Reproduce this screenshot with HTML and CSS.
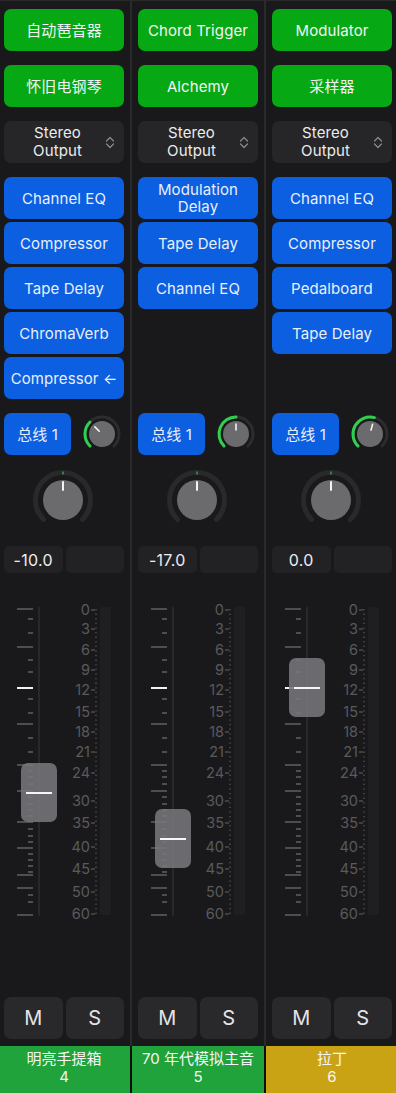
FILE: index.html
```html
<!DOCTYPE html>
<html lang="zh">
<head>
<meta charset="utf-8">
<title>Mixer</title>
<link rel="stylesheet" href="styles.css">
</head>
<body>
<div class="mixer">

  <!-- Strip 1 -->
  <section class="strip">
    <div class="btn green">自动琶音器</div>
    <div class="btn green">怀旧电钢琴</div>
    <div class="btn output"><span class="out-label">Stereo<br>Output</span><svg class="updown" viewBox="0 0 10 13"><path d="M1.5 5 L5 1.5 L8.5 5 M1.5 8 L5 11.5 L8.5 8"/></svg></div>
    <div class="inserts">
      <div class="btn blue">Channel EQ</div>
      <div class="btn blue">Compressor</div>
      <div class="btn blue">Tape Delay</div>
      <div class="btn blue">ChromaVerb</div>
      <div class="btn blue">Compressor ←</div>
    </div>
    <div class="sendrow">
      <div class="btn blue bus">总线 1</div>
      <svg class="send" viewBox="0 0 40 40">
        <path class="ring" d="M7.98 32.02 A17 17 0 1 1 32.02 32.02"/>
        <path class="lvl" d="M7.98 32.02 A17 17 0 0 1 7.98 7.98"/>
        <circle class="cap" cx="20" cy="20" r="13"/>
        <line class="ind" x1="17.2" y1="17.2" x2="12.9" y2="12.9"/>
      </svg>
    </div>
    <div class="panrow">
      <svg class="pan" viewBox="0 0 64 64">
        <path class="ring" d="M12.55 51.45 A27.5 27.5 0 1 1 51.45 51.45"/>
        <line class="mark" x1="32" y1="3.5" x2="32" y2="6.5"/>
        <circle class="cap" cx="32" cy="32" r="20"/>
        <line class="ind" x1="32" y1="14" x2="32" y2="22"/>
      </svg>
    </div>
    <div class="values"><div class="val">-10.0</div><div class="val"></div></div>
    <div class="fader">
      <svg class="scale" viewBox="0 0 120 424">
        <rect class="track" x="34" y="34" width="2" height="309"/>
        <g class="long"><line x1="13" x2="29" y1="36" y2="36"/><line x1="13" x2="29" y1="74" y2="74"/><line x1="13" x2="29" y1="151" y2="151"/><line x1="13" x2="29" y1="192" y2="192"/><line x1="13" x2="29" y1="218" y2="218"/><line x1="13" x2="29" y1="249" y2="249"/><line x1="13" x2="29" y1="275" y2="275"/><line x1="13" x2="29" y1="302" y2="302"/><line x1="13" x2="29" y1="315" y2="315"/><line x1="13" x2="29" y1="342" y2="342"/></g>
        <g class="short"><line x1="24" x2="29" y1="46" y2="46"/><line x1="24" x2="29" y1="60" y2="60"/><line x1="24" x2="29" y1="87" y2="87"/><line x1="24" x2="29" y1="99" y2="99"/><line x1="24" x2="29" y1="126" y2="126"/><line x1="24" x2="29" y1="140" y2="140"/><line x1="24" x2="29" y1="165" y2="165"/><line x1="24" x2="29" y1="179" y2="179"/><line x1="24" x2="29" y1="198" y2="198"/><line x1="24" x2="29" y1="204" y2="204"/><line x1="24" x2="29" y1="211" y2="211"/><line x1="24" x2="29" y1="224" y2="224"/><line x1="24" x2="29" y1="231" y2="231"/><line x1="24" x2="29" y1="237" y2="237"/><line x1="24" x2="29" y1="243" y2="243"/><line x1="24" x2="29" y1="256" y2="256"/><line x1="24" x2="29" y1="263" y2="263"/><line x1="24" x2="29" y1="269" y2="269"/><line x1="24" x2="29" y1="281" y2="281"/><line x1="24" x2="29" y1="287" y2="287"/><line x1="24" x2="29" y1="293" y2="293"/><line x1="24" x2="29" y1="299" y2="299"/><line x1="24" x2="29" y1="322" y2="322"/><line x1="24" x2="29" y1="329" y2="329"/></g>
        <line class="unity" x1="13" x2="29" y1="115" y2="115"/>
        <line class="dots" x1="92" x2="92" y1="36" y2="343"/>
        <rect class="meter" x="96" y="34" width="11" height="308" rx="2"/>
        <g class="dash"><line x1="87" x2="91" y1="37" y2="37"/><line x1="87" x2="91" y1="56" y2="56"/><line x1="87" x2="91" y1="77" y2="77"/><line x1="87" x2="91" y1="97" y2="97"/><line x1="87" x2="91" y1="117" y2="117"/><line x1="87" x2="91" y1="139" y2="139"/><line x1="87" x2="91" y1="159" y2="159"/><line x1="87" x2="91" y1="179" y2="179"/><line x1="87" x2="91" y1="200" y2="200"/><line x1="87" x2="91" y1="228" y2="228"/><line x1="87" x2="91" y1="250" y2="250"/><line x1="87" x2="91" y1="274" y2="274"/><line x1="87" x2="91" y1="296" y2="296"/><line x1="87" x2="91" y1="319" y2="319"/><line x1="87" x2="91" y1="341" y2="341"/></g>
        <g class="lbl"><text x="86" y="42">0</text><text x="86" y="61">3</text><text x="86" y="82">6</text><text x="86" y="102">9</text><text x="86" y="122">12</text><text x="86" y="144">15</text><text x="86" y="164">18</text><text x="86" y="184">21</text><text x="86" y="205">24</text><text x="86" y="233">30</text><text x="86" y="255">35</text><text x="86" y="279">40</text><text x="86" y="301">45</text><text x="86" y="324">50</text><text x="86" y="346">60</text></g>
      </svg>
      <div class="knob" style="top:190px"><span class="knob-line"></span></div>
    </div>
    <div class="ms"><div class="msbtn">M</div><div class="msbtn">S</div></div>
    <div class="name green-name">明亮手提箱<br>4</div>
  </section>

  <!-- Strip 2 -->
  <section class="strip">
    <div class="btn green">Chord Trigger</div>
    <div class="btn green">Alchemy</div>
    <div class="btn output"><span class="out-label">Stereo<br>Output</span><svg class="updown" viewBox="0 0 10 13"><path d="M1.5 5 L5 1.5 L8.5 5 M1.5 8 L5 11.5 L8.5 8"/></svg></div>
    <div class="inserts">
      <div class="btn blue two">Modulation<br>Delay</div>
      <div class="btn blue">Tape Delay</div>
      <div class="btn blue">Channel EQ</div>
    </div>
    <div class="sendrow">
      <div class="btn blue bus">总线 1</div>
      <svg class="send" viewBox="0 0 40 40">
        <path class="ring" d="M7.98 32.02 A17 17 0 1 1 32.02 32.02"/>
        <path class="lvl" d="M7.98 32.02 A17 17 0 0 1 20 3"/>
        <circle class="cap" cx="20" cy="20" r="13"/>
        <line class="ind" x1="20" y1="16" x2="20" y2="10"/>
      </svg>
    </div>
    <div class="panrow">
      <svg class="pan" viewBox="0 0 64 64">
        <path class="ring" d="M12.55 51.45 A27.5 27.5 0 1 1 51.45 51.45"/>
        <line class="mark" x1="32" y1="3.5" x2="32" y2="6.5"/>
        <circle class="cap" cx="32" cy="32" r="20"/>
        <line class="ind" x1="32" y1="14" x2="32" y2="22"/>
      </svg>
    </div>
    <div class="values"><div class="val">-17.0</div><div class="val"></div></div>
    <div class="fader">
      <svg class="scale" viewBox="0 0 120 424">
        <rect class="track" x="34" y="34" width="2" height="309"/>
        <g class="long"><line x1="13" x2="29" y1="36" y2="36"/><line x1="13" x2="29" y1="74" y2="74"/><line x1="13" x2="29" y1="151" y2="151"/><line x1="13" x2="29" y1="192" y2="192"/><line x1="13" x2="29" y1="218" y2="218"/><line x1="13" x2="29" y1="249" y2="249"/><line x1="13" x2="29" y1="275" y2="275"/><line x1="13" x2="29" y1="302" y2="302"/><line x1="13" x2="29" y1="315" y2="315"/><line x1="13" x2="29" y1="342" y2="342"/></g>
        <g class="short"><line x1="24" x2="29" y1="46" y2="46"/><line x1="24" x2="29" y1="60" y2="60"/><line x1="24" x2="29" y1="87" y2="87"/><line x1="24" x2="29" y1="99" y2="99"/><line x1="24" x2="29" y1="126" y2="126"/><line x1="24" x2="29" y1="140" y2="140"/><line x1="24" x2="29" y1="165" y2="165"/><line x1="24" x2="29" y1="179" y2="179"/><line x1="24" x2="29" y1="198" y2="198"/><line x1="24" x2="29" y1="204" y2="204"/><line x1="24" x2="29" y1="211" y2="211"/><line x1="24" x2="29" y1="224" y2="224"/><line x1="24" x2="29" y1="231" y2="231"/><line x1="24" x2="29" y1="237" y2="237"/><line x1="24" x2="29" y1="243" y2="243"/><line x1="24" x2="29" y1="256" y2="256"/><line x1="24" x2="29" y1="263" y2="263"/><line x1="24" x2="29" y1="269" y2="269"/><line x1="24" x2="29" y1="281" y2="281"/><line x1="24" x2="29" y1="287" y2="287"/><line x1="24" x2="29" y1="293" y2="293"/><line x1="24" x2="29" y1="299" y2="299"/><line x1="24" x2="29" y1="322" y2="322"/><line x1="24" x2="29" y1="329" y2="329"/></g>
        <line class="unity" x1="13" x2="29" y1="115" y2="115"/>
        <line class="dots" x1="92" x2="92" y1="36" y2="343"/>
        <rect class="meter" x="96" y="34" width="11" height="308" rx="2"/>
        <g class="dash"><line x1="87" x2="91" y1="37" y2="37"/><line x1="87" x2="91" y1="56" y2="56"/><line x1="87" x2="91" y1="77" y2="77"/><line x1="87" x2="91" y1="97" y2="97"/><line x1="87" x2="91" y1="117" y2="117"/><line x1="87" x2="91" y1="139" y2="139"/><line x1="87" x2="91" y1="159" y2="159"/><line x1="87" x2="91" y1="179" y2="179"/><line x1="87" x2="91" y1="200" y2="200"/><line x1="87" x2="91" y1="228" y2="228"/><line x1="87" x2="91" y1="250" y2="250"/><line x1="87" x2="91" y1="274" y2="274"/><line x1="87" x2="91" y1="296" y2="296"/><line x1="87" x2="91" y1="319" y2="319"/><line x1="87" x2="91" y1="341" y2="341"/></g>
        <g class="lbl"><text x="86" y="42">0</text><text x="86" y="61">3</text><text x="86" y="82">6</text><text x="86" y="102">9</text><text x="86" y="122">12</text><text x="86" y="144">15</text><text x="86" y="164">18</text><text x="86" y="184">21</text><text x="86" y="205">24</text><text x="86" y="233">30</text><text x="86" y="255">35</text><text x="86" y="279">40</text><text x="86" y="301">45</text><text x="86" y="324">50</text><text x="86" y="346">60</text></g>
      </svg>
      <div class="knob" style="top:236px"><span class="knob-line"></span></div>
    </div>
    <div class="ms"><div class="msbtn">M</div><div class="msbtn">S</div></div>
    <div class="name green-name">70 年代模拟主音<br>5</div>
  </section>

  <!-- Strip 3 -->
  <section class="strip">
    <div class="btn green">Modulator</div>
    <div class="btn green">采样器</div>
    <div class="btn output"><span class="out-label">Stereo<br>Output</span><svg class="updown" viewBox="0 0 10 13"><path d="M1.5 5 L5 1.5 L8.5 5 M1.5 8 L5 11.5 L8.5 8"/></svg></div>
    <div class="inserts">
      <div class="btn blue">Channel EQ</div>
      <div class="btn blue">Compressor</div>
      <div class="btn blue">Pedalboard</div>
      <div class="btn blue">Tape Delay</div>
    </div>
    <div class="sendrow">
      <div class="btn blue bus">总线 1</div>
      <svg class="send" viewBox="0 0 40 40">
        <path class="ring" d="M7.98 32.02 A17 17 0 1 1 32.02 32.02"/>
        <path class="lvl" d="M7.98 32.02 A17 17 0 0 1 24.4 3.58"/>
        <circle class="cap" cx="20" cy="20" r="13"/>
        <line class="ind" x1="21" y1="16.1" x2="22.6" y2="10.3"/>
      </svg>
    </div>
    <div class="panrow">
      <svg class="pan" viewBox="0 0 64 64">
        <path class="ring" d="M12.55 51.45 A27.5 27.5 0 1 1 51.45 51.45"/>
        <line class="mark" x1="32" y1="3.5" x2="32" y2="6.5"/>
        <circle class="cap" cx="32" cy="32" r="20"/>
        <line class="ind" x1="32" y1="14" x2="32" y2="22"/>
      </svg>
    </div>
    <div class="values"><div class="val">0.0</div><div class="val"></div></div>
    <div class="fader">
      <svg class="scale" viewBox="0 0 120 424">
        <rect class="track" x="34" y="34" width="2" height="309"/>
        <g class="long"><line x1="13" x2="29" y1="36" y2="36"/><line x1="13" x2="29" y1="74" y2="74"/><line x1="13" x2="29" y1="151" y2="151"/><line x1="13" x2="29" y1="192" y2="192"/><line x1="13" x2="29" y1="218" y2="218"/><line x1="13" x2="29" y1="249" y2="249"/><line x1="13" x2="29" y1="275" y2="275"/><line x1="13" x2="29" y1="302" y2="302"/><line x1="13" x2="29" y1="315" y2="315"/><line x1="13" x2="29" y1="342" y2="342"/></g>
        <g class="short"><line x1="24" x2="29" y1="46" y2="46"/><line x1="24" x2="29" y1="60" y2="60"/><line x1="24" x2="29" y1="87" y2="87"/><line x1="24" x2="29" y1="99" y2="99"/><line x1="24" x2="29" y1="126" y2="126"/><line x1="24" x2="29" y1="140" y2="140"/><line x1="24" x2="29" y1="165" y2="165"/><line x1="24" x2="29" y1="179" y2="179"/><line x1="24" x2="29" y1="198" y2="198"/><line x1="24" x2="29" y1="204" y2="204"/><line x1="24" x2="29" y1="211" y2="211"/><line x1="24" x2="29" y1="224" y2="224"/><line x1="24" x2="29" y1="231" y2="231"/><line x1="24" x2="29" y1="237" y2="237"/><line x1="24" x2="29" y1="243" y2="243"/><line x1="24" x2="29" y1="256" y2="256"/><line x1="24" x2="29" y1="263" y2="263"/><line x1="24" x2="29" y1="269" y2="269"/><line x1="24" x2="29" y1="281" y2="281"/><line x1="24" x2="29" y1="287" y2="287"/><line x1="24" x2="29" y1="293" y2="293"/><line x1="24" x2="29" y1="299" y2="299"/><line x1="24" x2="29" y1="322" y2="322"/><line x1="24" x2="29" y1="329" y2="329"/></g>
        <line class="unity" x1="13" x2="29" y1="115" y2="115"/>
        <line class="dots" x1="92" x2="92" y1="36" y2="343"/>
        <rect class="meter" x="96" y="34" width="11" height="308" rx="2"/>
        <g class="dash"><line x1="87" x2="91" y1="37" y2="37"/><line x1="87" x2="91" y1="56" y2="56"/><line x1="87" x2="91" y1="77" y2="77"/><line x1="87" x2="91" y1="97" y2="97"/><line x1="87" x2="91" y1="117" y2="117"/><line x1="87" x2="91" y1="139" y2="139"/><line x1="87" x2="91" y1="159" y2="159"/><line x1="87" x2="91" y1="179" y2="179"/><line x1="87" x2="91" y1="200" y2="200"/><line x1="87" x2="91" y1="228" y2="228"/><line x1="87" x2="91" y1="250" y2="250"/><line x1="87" x2="91" y1="274" y2="274"/><line x1="87" x2="91" y1="296" y2="296"/><line x1="87" x2="91" y1="319" y2="319"/><line x1="87" x2="91" y1="341" y2="341"/></g>
        <g class="lbl"><text x="86" y="42">0</text><text x="86" y="61">3</text><text x="86" y="82">6</text><text x="86" y="102">9</text><text x="86" y="122">12</text><text x="86" y="144">15</text><text x="86" y="164">18</text><text x="86" y="184">21</text><text x="86" y="205">24</text><text x="86" y="233">30</text><text x="86" y="255">35</text><text x="86" y="279">40</text><text x="86" y="301">45</text><text x="86" y="324">50</text><text x="86" y="346">60</text></g>
      </svg>
      <div class="knob" style="top:85px"><span class="knob-line"></span></div>
    </div>
    <div class="ms"><div class="msbtn">M</div><div class="msbtn">S</div></div>
    <div class="name yellow-name">拉丁<br>6</div>
  </section>

</div>
</body>
</html>
```

FILE: styles.css
```css
* { box-sizing: border-box; }

html, body {
  margin: 0;
  padding: 0;
  background: #19191b;
  height: 1093px;
  overflow: hidden;
}

body {
  font-family: Inter, "Noto Sans CJK SC", sans-serif;
  color: #f2f2f4;
  border-top: 1px solid #29292b;
}

.mixer {
  display: flex;
  margin-left: -2px;
  margin-top: -1px;
}

.strip {
  flex: 0 0 134px;
  width: 134px;
  padding: 9px 6px 0;
  border-right: 2px solid #2a2a2c;
  display: flex;
  flex-direction: column;
}

.btn {
  height: 42px;
  border-radius: 7px;
  display: flex;
  align-items: center;
  justify-content: center;
  text-align: center;
  font-size: 15px;
  line-height: 17px;
  letter-spacing: 0.1px;
  color: #f4f4f6;
  flex-shrink: 0;
}

.green {
  background: #06a814;
  margin-bottom: 14px;
}

.blue {
  background: #0b5fe0;
  color: #e9effa;
}

.output {
  background: #262628;
  margin-bottom: 14px;
  padding: 0 9px 0 6px;
  justify-content: space-between;
  color: #ececee;
}

.out-label {
  flex: 1;
  text-align: center;
  font-size: 15px;
  line-height: 18px;
}

.updown {
  width: 10px;
  height: 13px;
  flex-shrink: 0;
}

.updown path {
  fill: none;
  stroke: #8b8b8f;
  stroke-width: 1.2;
  stroke-linecap: round;
  stroke-linejoin: round;
}

.inserts {
  height: 222px;
  display: flex;
  flex-direction: column;
  gap: 3px;
  flex-shrink: 0;
}

.two {
  line-height: 17px;
}

.sendrow {
  margin-top: 14px;
  height: 42px;
  display: flex;
  align-items: center;
  justify-content: space-between;
  flex-shrink: 0;
}

.bus {
  width: 67px;
  font-size: 15px;
}

.send {
  width: 40px;
  height: 40px;
  margin-right: 2px;
}

.ring {
  fill: none;
  stroke: #2c2c2e;
  stroke-width: 3;
  stroke-linecap: round;
}

.lvl {
  fill: none;
  stroke: #2fcf4f;
  stroke-width: 3;
  stroke-linecap: round;
}

.cap {
  fill: #6b6b6e;
}

.ind {
  stroke: #f4f4f4;
  stroke-width: 1.6;
  stroke-linecap: round;
}

.panrow {
  margin-top: 13px;
  height: 64px;
  display: flex;
  justify-content: center;
  flex-shrink: 0;
}

.pan {
  width: 64px;
  height: 64px;
  margin-left: -2px;
}

.pan .ring {
  stroke-width: 5;
  stroke: #29292b;
}

.mark {
  stroke: #2f9c45;
  stroke-width: 1.6;
}

.pan .ind {
  stroke-width: 2;
}

.values {
  margin-top: 14px;
  height: 27px;
  display: flex;
  gap: 3px;
  flex-shrink: 0;
}

.val {
  flex: 1;
  background: #222224;
  border-radius: 5px;
  display: flex;
  align-items: center;
  justify-content: center;
  font-size: 16px;
  letter-spacing: 0.3px;
  color: #ededef;
}

.fader {
  position: relative;
  height: 424px;
  flex-shrink: 0;
}

.scale {
  display: block;
  width: 120px;
  height: 424px;
}

.track { fill: #28282a; }

.long line, .short line {
  stroke: #5c5c5f;
  stroke-width: 1.6;
}

.unity {
  stroke: #f2f2f2;
  stroke-width: 2;
}

.dots {
  stroke: #56565a;
  stroke-width: 1.3;
  stroke-dasharray: 1.3 3.3;
}

.meter { fill: #1f1f21; }

.dash line {
  stroke: #56565a;
  stroke-width: 1.3;
}

.lbl text {
  fill: #5a5a5e;
  font-family: Inter, sans-serif;
  font-size: 14.5px;
  text-anchor: end;
}

.knob {
  position: absolute;
  left: 17px;
  width: 36px;
  height: 59px;
  border-radius: 7px;
  background: rgba(118, 118, 123, 0.88);
  display: flex;
  align-items: center;
  justify-content: center;
}

.knob-line {
  display: block;
  width: 26px;
  height: 2px;
  background: #f6f6f6;
}

.ms {
  height: 42px;
  display: flex;
  gap: 3px;
  flex-shrink: 0;
}

.msbtn {
  flex: 1;
  background: #29292b;
  border-radius: 7px;
  display: flex;
  align-items: center;
  justify-content: center;
  font-size: 20px;
  color: #e4e4e6;
}

.name {
  margin: 7px -8px 0 -6px;
  height: 60px;
  border-right: 2px solid #0e0e0f;
  padding-top: 4px;
  text-align: center;
  font-size: 15px;
  line-height: 18px;
  color: #f6f6f6;
  flex-shrink: 0;
}

.green-name { background: #20a33a; }
.yellow-name { background: #c9a314; }
```
